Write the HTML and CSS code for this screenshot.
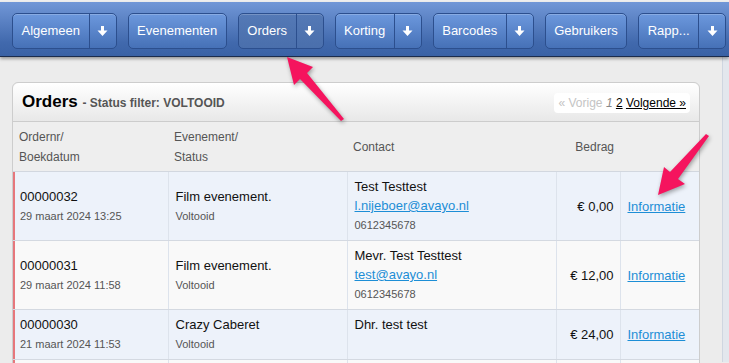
FILE: index.html
```html
<!DOCTYPE html>
<html lang="nl">
<head>
    <meta charset="UTF-8">
    <title>Orders</title>
    <link rel="stylesheet" href="styles.css">
</head>
<body>
    <div class="topbar">
        <nav class="menu">
            <div class="btn"><span class="label">Algemeen</span><span class="drop"><svg width="11" height="10" viewBox="0 0 11 10"><path d="M4 0h3v4.5h3.5L5.5 10 0.5 4.5H4z" fill="#fff"/></svg></span></div>
            <div class="btn"><span class="label">Evenementen</span></div>
            <div class="btn active"><span class="label">Orders</span><span class="drop"><svg width="11" height="10" viewBox="0 0 11 10"><path d="M4 0h3v4.5h3.5L5.5 10 0.5 4.5H4z" fill="#fff"/></svg></span></div>
            <div class="btn"><span class="label">Korting</span><span class="drop"><svg width="11" height="10" viewBox="0 0 11 10"><path d="M4 0h3v4.5h3.5L5.5 10 0.5 4.5H4z" fill="#fff"/></svg></span></div>
            <div class="btn"><span class="label">Barcodes</span><span class="drop"><svg width="11" height="10" viewBox="0 0 11 10"><path d="M4 0h3v4.5h3.5L5.5 10 0.5 4.5H4z" fill="#fff"/></svg></span></div>
            <div class="btn"><span class="label">Gebruikers</span></div>
            <div class="btn"><span class="label">Rapp...</span><span class="drop"><svg width="11" height="10" viewBox="0 0 11 10"><path d="M4 0h3v4.5h3.5L5.5 10 0.5 4.5H4z" fill="#fff"/></svg></span></div>
        </nav>
    </div>
    <div class="page">
        <main class="content">
            <section class="panel">
                <div class="panel-head">
                    <h2>Orders <small>- Status filter: VOLTOOID</small></h2>
                    <div class="pager">
                        <span class="off">&laquo; Vorige</span>
                        <em>1</em>
                        <a href="#">2</a>
                        <a href="#">Volgende &raquo;</a>
                    </div>
                </div>
                <table class="orders">
                    <colgroup>
                        <col style="width:155px">
                        <col style="width:179px">
                        <col style="width:209px">
                        <col style="width:64px">
                        <col style="width:79px">
                    </colgroup>
                    <thead>
                        <tr>
                            <th>Ordernr/<br>Boekdatum</th>
                            <th>Evenement/<br>Status</th>
                            <th>Contact</th>
                            <th class="amount">Bedrag</th>
                            <th></th>
                        </tr>
                    </thead>
                    <tbody>
                        <tr>
                            <td class="nr">00000032<br><span class="sub">29 maart 2024 13:25</span></td>
                            <td>Film evenement.<br><span class="sub">Voltooid</span></td>
                            <td class="contact">Test Testtest<br><a href="#">l.nijeboer@avayo.nl</a><br><span class="sub">0612345678</span></td>
                            <td class="amount">&euro; 0,00</td>
                            <td><a href="#">Informatie</a></td>
                        </tr>
                        <tr>
                            <td class="nr">00000031<br><span class="sub">29 maart 2024 11:58</span></td>
                            <td>Film evenement.<br><span class="sub">Voltooid</span></td>
                            <td class="contact">Mevr. Test Testtest<br><a href="#">test@avayo.nl</a><br><span class="sub">0612345678</span></td>
                            <td class="amount">&euro; 12,00</td>
                            <td><a href="#">Informatie</a></td>
                        </tr>
                        <tr>
                            <td class="nr">00000030<br><span class="sub">21 maart 2024 11:53</span></td>
                            <td>Crazy Caberet<br><span class="sub">Voltooid</span></td>
                            <td class="contact">Dhr. test test</td>
                            <td class="amount">&euro; 24,00</td>
                            <td><a href="#">Informatie</a></td>
                        </tr>
                        <tr class="more">
                            <td class="nr"></td>
                            <td></td>
                            <td></td>
                            <td></td>
                            <td></td>
                        </tr>
                    </tbody>
                </table>
            </section>
        </main>
        <div class="strip"></div>
    </div>
    <svg class="marks" width="729" height="363" viewBox="0 0 729 363">
        <polygon points="287,57 313,67 307,73 344,119 341,121 300,79 294,85" />
        <polygon points="658,195 664,167 670,172 706,134 709,136 678,179 685,184" />
    </svg>
</body>
</html>
```

FILE: styles.css
```css
html, body
{
    margin: 0;
    padding: 0;
}
body
{
    background: #ececec;
    font-family: 'Liberation Sans', Arial, sans-serif;
    font-size: 13px;
    color: #111;
    height: 363px;
    overflow: hidden;
    position: relative;
}
.topbar
{
    padding-top: 2px;
    background: #efefef;
    position: relative;
    z-index: 1;
}
.menu
{
    height: 55px;
    box-sizing: border-box;
    padding: 11px 0 0 12px;
    display: flex;
    gap: 11px;
    align-items: flex-start;
    background: linear-gradient(#7197d7, #4169ad 75%, #3a62a5);
    border-bottom: 1px solid #1b2c4c;
    box-shadow: 0 2px 3px rgba(0, 0, 0, 0.35);
}
.btn
{
    display: flex;
    height: 36px;
    box-sizing: border-box;
    border: 1px solid #2c4f8e;
    border-radius: 5px;
    background: linear-gradient(#6c98dd, #4671b7);
    box-shadow: inset 0 1px 0 rgba(255, 255, 255, 0.2);
}
.btn.active
{
    background: linear-gradient(#5479b6, #4a6fac);
}
.btn .label
{
    padding: 0 8.5px;
    line-height: 34px;
    color: #fff;
    font-size: 13px;
}
.btn .drop
{
    width: 26px;
    display: flex;
    align-items: center;
    justify-content: center;
    border-left: 1px solid #2c4f8e;
}
.page
{
    display: flex;
}
.content
{
    flex: 1;
    padding: 25px 22px 0 12px;
}
.strip
{
    width: 6px;
    height: 305px;
    background: #e3e7ed;
    border-left: 1px solid #cfd6e0;
}
.panel
{
    border: 1px solid #cdcdcd;
    border-radius: 6px 6px 0 0;
    background: #eeeeee;
}
.panel-head
{
    height: 38px;
    display: flex;
    align-items: center;
    justify-content: space-between;
    padding: 0 9px 0 9px;
    border-bottom: 1px solid #cccccc;
    border-radius: 6px 6px 0 0;
    background: linear-gradient(#ffffff, #e8e8e8);
}
.panel-head h2
{
    margin: 0;
    font-size: 17px;
    color: #000;
}
.panel-head small
{
    font-size: 12px;
    color: #555;
}
.pager
{
    background: #fff;
    border-radius: 4px;
    padding: 2px 4px;
    font-size: 12px;
    line-height: 16px;
    margin-top: 2px;
}
.pager .off
{
    color: #c4c4c4;
}
.pager em
{
    color: #888;
}
.pager a
{
    color: #000;
}
.orders
{
    width: 686px;
    border-collapse: collapse;
    table-layout: fixed;
}
.orders th
{
    text-align: left;
    font-weight: normal;
    font-size: 12px;
    color: #555;
    line-height: 20px;
    padding: 5px 6px 4px 6px;
    border-bottom: 1px solid #d2d7df;
}
.orders td
{
    padding: 5px 6px 5px 7px;
    line-height: 19px;
    vertical-align: middle;
    border-right: 1px solid #dde3ec;
    border-bottom: 1px solid #d4d9e1;
    background: #edf2fa;
}
.orders td:last-child
{
    border-right: none;
}
.orders tbody tr:nth-child(even) td
{
    background: #f9f9f9;
}
.orders tr.more td
{
    height: 30px;
}
.orders td.nr
{
    box-shadow: inset 2px 0 #e6777c;
}
.orders td.contact
{
    vertical-align: top;
}
.orders .amount
{
    text-align: right;
}
.orders .sub
{
    font-size: 11px;
    color: #555;
}
.orders a
{
    color: #1d8ed6;
}
.marks
{
    position: absolute;
    left: 0;
    top: 0;
    pointer-events: none;
    z-index: 2;
    filter: drop-shadow(1px 2px 2px rgba(0, 0, 0, 0.35));
}
.marks polygon
{
    fill: #f5145e;
}
```
